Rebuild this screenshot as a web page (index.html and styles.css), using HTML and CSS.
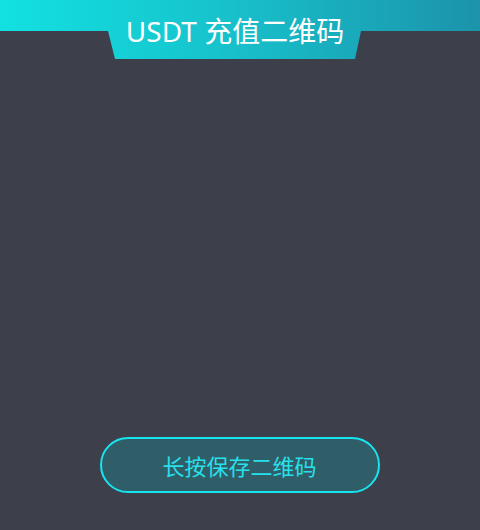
FILE: index.html
```html
<!DOCTYPE html>
<html lang="zh-CN">
<head>
<meta charset="utf-8">
<title>USDT 充值二维码</title>
<link rel="stylesheet" href="styles.css">
</head>
<body>
<div class="page">
  <header class="header">
    <h1 class="title">USDT 充值二维码</h1>
  </header>
  <main class="content"></main>
  <div class="actions">
    <button class="save-btn" type="button">长按保存二维码</button>
  </div>
</div>
</body>
</html>
```

FILE: styles.css
```css
html, body {
  margin: 0;
  padding: 0;
  background: #3d3f4b;
}
.page {
  width: 480px;
  height: 530px;
  display: flex;
  flex-direction: column;
  font-family: "Noto Sans", "Noto Sans CJK SC", sans-serif;
}
.header {
  height: 59px;
  background: linear-gradient(90deg, #12e1e1 0%, #17c3cd 45%, #1c93aa 100%);
  clip-path: polygon(0 0, 480px 0, 480px 31px, 361px 31px, 355px 59px, 115px 59px, 108px 31px, 0 31px);
  display: flex;
  justify-content: center;
  padding-right: 10px;
}
.title {
  margin: 0;
  padding-top: 17px;
  font-size: 28px;
  line-height: 1;
  font-weight: 400;
  color: #ffffff;
  font-family: "Noto Sans", "Noto Sans CJK SC", sans-serif;
}
.content {
  flex: 1;
}
.actions {
  display: flex;
  justify-content: center;
  padding-bottom: 37px;
  padding-right: 1px;
}
.save-btn {
  width: 280px;
  height: 56px;
  box-sizing: border-box;
  border: 2px solid #18e4ef;
  border-radius: 28px;
  background: #2f5d68;
  color: #27e0ea;
  font-family: "Noto Sans CJK SC", sans-serif;
  font-size: 22px;
  padding: 0;
}
```
